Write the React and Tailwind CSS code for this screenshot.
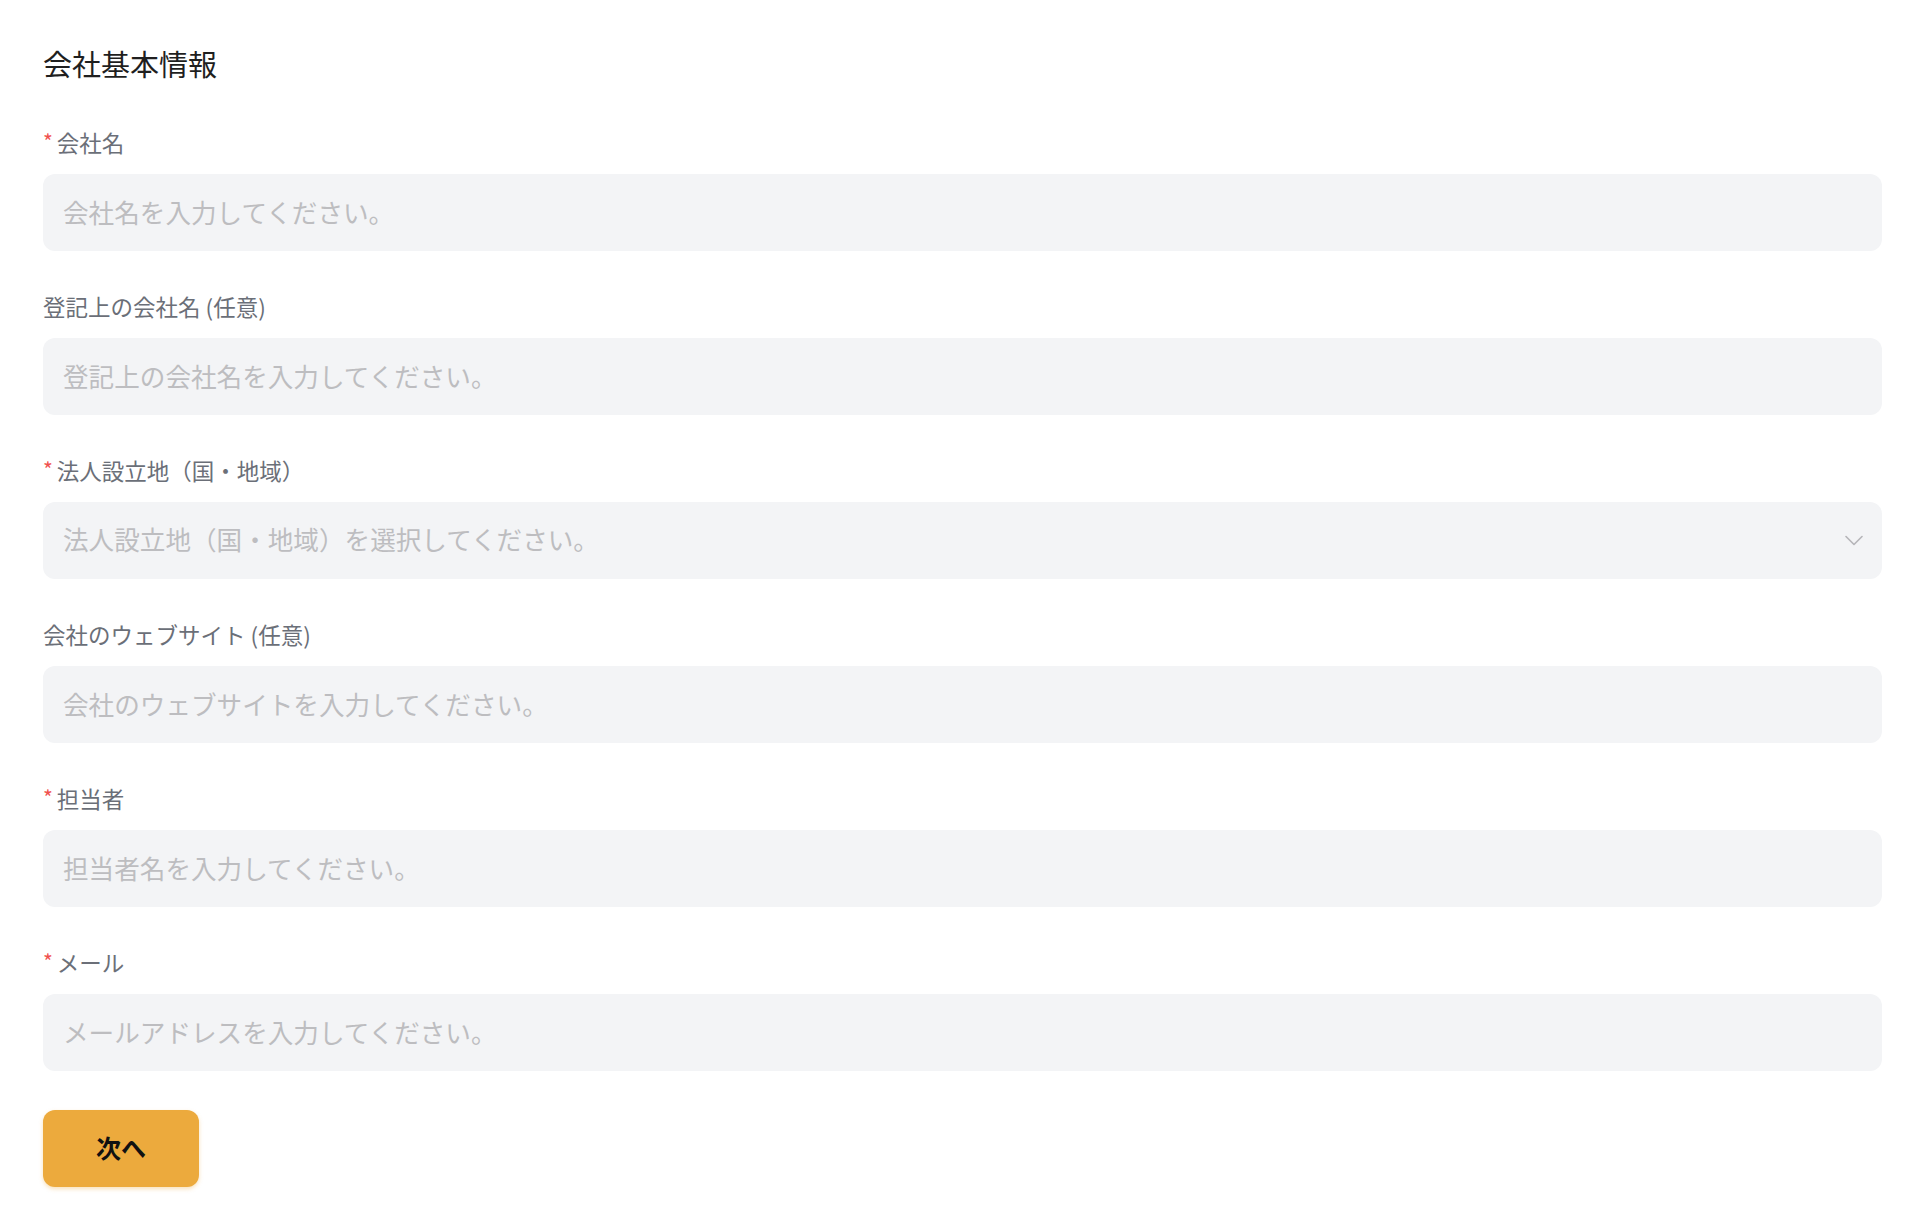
import { useState } from "react";

const fields = [
  { key: "name", label: "会社名", required: true, placeholder: "会社名を入力してください。" },
  { key: "legalName", label: "登記上の会社名 (任意)", placeholder: "登記上の会社名を入力してください。" },
  { key: "country", label: "法人設立地（国・地域）", required: true, placeholder: "法人設立地（国・地域）を選択してください。", select: true },
  { key: "website", label: "会社のウェブサイト (任意)", placeholder: "会社のウェブサイトを入力してください。" },
  { key: "contact", label: "担当者", required: true, placeholder: "担当者名を入力してください。" },
  { key: "email", label: "メール", required: true, placeholder: "メールアドレスを入力してください。" },
];

function Chevron() {
  return (
    <svg width="18" height="11" viewBox="0 0 18 11" fill="none">
      <path d="M1 1.5 L9 9.5 L17 1.5" stroke="#b5b5b8" strokeWidth="1.6" strokeLinecap="round" strokeLinejoin="round" />
    </svg>
  );
}

export default function App() {
  const [values, setValues] = useState({});

  const update = (key) => (e) => setValues((prev) => ({ ...prev, [key]: e.target.value }));

  return (
    <div
      className="min-h-screen bg-white pl-[43px] pr-[38px] pt-[44px] pb-[28px]"
      style={{ fontFamily: '"Noto Sans CJK JP", "Noto Sans", sans-serif' }}
    >
      <h1 className="text-[29px] leading-[38px] text-[#1f1f1f] font-normal">会社基本情報</h1>

      <div className="mt-[46px] flex flex-col">
        {fields.map((f) => (
          <div key={f.key} className="mb-[41px] last:mb-[39px]">
            <label className="flex h-[30px] text-[22.5px] leading-[28px] text-[#6b6f78]">
              {f.required && <span className="text-[#f0524f] text-[21px] leading-[26px] mr-[4px]">*</span>}
              {f.label}
            </label>
            {f.select ? (
              <div className="mt-4 h-[77px] rounded-xl bg-[#f3f4f6] flex items-center justify-between pl-5 pr-[19px] pb-[3px] cursor-pointer">
                <span className="text-[25.6px] text-[#bdbdc0]">{f.placeholder}</span>
                <span className="pt-[3px]">
                  <Chevron />
                </span>
              </div>
            ) : (
              <input
                value={values[f.key] || ""}
                onChange={update(f.key)}
                placeholder={f.placeholder}
                className="mt-4 block w-full h-[77px] rounded-xl bg-[#f3f4f6] px-5 pb-[3px] text-[25.6px] text-[#1f1f1f] placeholder:text-[#bdbdc0] outline-none"
              />
            )}
          </div>
        ))}
      </div>

      <button className="w-[156px] h-[77px] rounded-xl bg-[#ecaa3d] shadow-[0_2px_4px_rgba(236,170,61,0.35)] pb-[2px] text-[25px] font-bold text-[#111]">
        次へ
      </button>
    </div>
  );
}
